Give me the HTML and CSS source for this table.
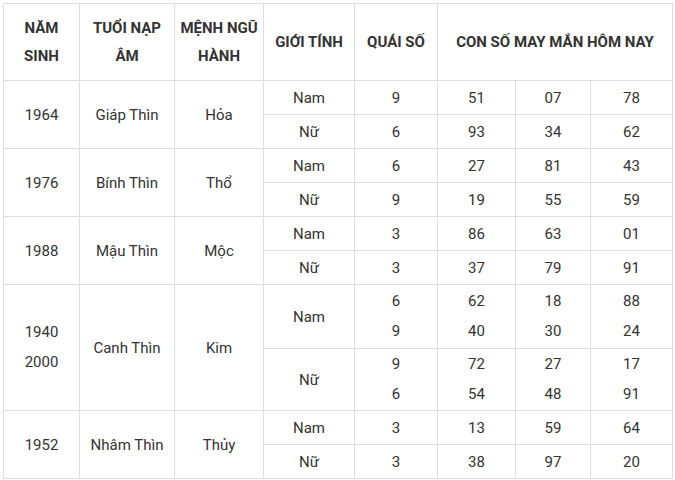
FILE: index.html
```html
<!DOCTYPE html>
<html lang="vi">
<head>
<meta charset="utf-8">
<link rel="stylesheet" href="styles.css">
</head>
<body>
<table class="lucky">
  <colgroup>
    <col class="c1"><col class="c2"><col class="c3"><col class="c4"><col class="c5"><col class="c6"><col class="c7"><col class="c8">
  </colgroup>
  <thead>
    <tr class="head">
      <th>NĂM<br>SINH</th>
      <th>TUỔI NẠP<br>ÂM</th>
      <th>MỆNH NGŨ<br>HÀNH</th>
      <th>GIỚI TÍNH</th>
      <th>QUÁI SỐ</th>
      <th colspan="3">CON SỐ MAY MẮN HÔM NAY</th>
    </tr>
  </thead>
  <tbody>
    <tr class="single"><td rowspan="2">1964</td><td rowspan="2">Giáp Thìn</td><td rowspan="2">Hỏa</td><td>Nam</td><td>9</td><td>51</td><td>07</td><td>78</td></tr>
    <tr class="single"><td>Nữ</td><td>6</td><td>93</td><td>34</td><td>62</td></tr>
    <tr class="single"><td rowspan="2">1976</td><td rowspan="2">Bính Thìn</td><td rowspan="2">Thổ</td><td>Nam</td><td>6</td><td>27</td><td>81</td><td>43</td></tr>
    <tr class="single"><td>Nữ</td><td>9</td><td>19</td><td>55</td><td>59</td></tr>
    <tr class="single"><td rowspan="2">1988</td><td rowspan="2">Mậu Thìn</td><td rowspan="2">Mộc</td><td>Nam</td><td>3</td><td>86</td><td>63</td><td>01</td></tr>
    <tr class="single"><td>Nữ</td><td>3</td><td>37</td><td>79</td><td>91</td></tr>
    <tr class="double-a"><td rowspan="2" class="multi">1940<br>2000</td><td rowspan="2">Canh Thìn</td><td rowspan="2">Kim</td><td>Nam</td><td class="multi">6<br>9</td><td class="multi">62<br>40</td><td class="multi">18<br>30</td><td class="multi">88<br>24</td></tr>
    <tr class="double-b"><td>Nữ</td><td class="multi">9<br>6</td><td class="multi">72<br>54</td><td class="multi">27<br>48</td><td class="multi">17<br>91</td></tr>
    <tr class="single"><td rowspan="2">1952</td><td rowspan="2">Nhâm Thìn</td><td rowspan="2">Thủy</td><td>Nam</td><td>3</td><td>13</td><td>59</td><td>64</td></tr>
    <tr class="single"><td>Nữ</td><td>3</td><td>38</td><td>97</td><td>20</td></tr>
  </tbody>
</table>
</body>
</html>
```

FILE: styles.css
```css
html, body {
  margin: 0;
  padding: 0;
  background: #ffffff;
}
body {
  padding: 3px 0 0 3px;
  font-family: Roboto, "Liberation Sans", Arial, sans-serif;
  color: #333333;
}
.lucky {
  border-collapse: collapse;
  table-layout: fixed;
  width: 669px;
  font-size: 15px;
}
.lucky th,
.lucky td {
  border: 1px solid #dddddd;
  padding: 0 4px;
  text-align: center;
  vertical-align: middle;
  box-sizing: border-box;
}
.lucky th {
  font-weight: 700;
  line-height: 28px;
  color: #333333;
}
.lucky td {
  line-height: 20px;
  font-weight: 400;
}
.lucky td.multi {
  line-height: 29.5px;
}
.c1 { width: 76px; }
.c2 { width: 95px; }
.c3 { width: 89px; }
.c4 { width: 91px; }
.c5 { width: 83px; }
.c6 { width: 78px; }
.c7 { width: 75px; }
.c8 { width: 82px; }
.head { height: 77px; }
.single { height: 34px; }
.double-a { height: 64px; }
.double-b { height: 62px; }
```
